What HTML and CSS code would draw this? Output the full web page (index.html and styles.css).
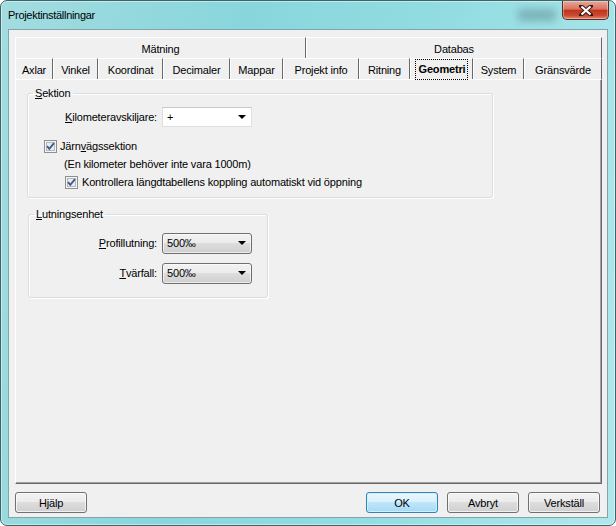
FILE: index.html
```html
<!DOCTYPE html>
<html lang="sv">
<head>
  <meta charset="UTF-8">
  <title>Projektinställningar</title>
  <link rel="stylesheet" href="styles.css">
</head>
<body>
  <div class="window">
    <div class="titlebar">
      <span class="title">Projektinställningar</span>
      <span class="ghost"></span>
      <span class="close">
        <svg width="14" height="11" viewBox="0 0 14 11">
          <path d="M2 1 L12 10 M12 1 L2 10" stroke="#3a1a14" stroke-width="4" stroke-linecap="square"/>
          <path d="M2.5 1.5 L11.5 9.5 M11.5 1.5 L2.5 9.5" stroke="#fff" stroke-width="2.2"/>
        </svg>
      </span>
    </div>

    <div class="client">
      <div class="tabs">
        <div class="tabrow back">
          <div class="tab">Mätning</div>
          <div class="tab">Databas</div>
        </div>
        <div class="tabrow front">
          <div class="tab">Axlar</div>
          <div class="tab">Vinkel</div>
          <div class="tab">Koordinat</div>
          <div class="tab">Decimaler</div>
          <div class="tab">Mappar</div>
          <div class="tab">Projekt info</div>
          <div class="tab">Ritning</div>
          <div class="tab active"><span class="focus">Geometri</span></div>
          <div class="tab">System</div>
          <div class="tab">Gränsvärde</div>
        </div>
      </div>

      <div class="panel">
        <fieldset class="group sektion">
          <legend><u>S</u>ektion</legend>
          <div class="field first">
            <label><u>K</u>ilometeravskiljare:</label>
            <div class="combo edit">+<i class="arrow"></i></div>
          </div>
          <div class="check main">
            <svg class="box" width="13" height="13" viewBox="0 0 13 13">
              <rect x="0.5" y="0.5" width="12" height="12" fill="#f4f4f4" stroke="#8e8f8f"/>
              <rect x="2.5" y="2.5" width="8" height="8" fill="#e9ebee" stroke="#b4b9be"/>
              <path d="M3 6.2 L5.3 8.8 L10 3.2" fill="none" stroke="#3d5a8c" stroke-width="1.8"/>
            </svg>
            <span>Järn<u>v</u>ägssektion</span>
          </div>
          <div class="note">(En kilometer behöver inte vara 1000m)</div>
          <div class="check sub">
            <svg class="box" width="13" height="13" viewBox="0 0 13 13">
              <rect x="0.5" y="0.5" width="12" height="12" fill="#f4f4f4" stroke="#8e8f8f"/>
              <rect x="2.5" y="2.5" width="8" height="8" fill="#e9ebee" stroke="#b4b9be"/>
              <path d="M3 6.2 L5.3 8.8 L10 3.2" fill="none" stroke="#3d5a8c" stroke-width="1.8"/>
            </svg>
            <span>Kontrollera längdtabellens koppling automatiskt vid öppning</span>
          </div>
        </fieldset>

        <fieldset class="group lutning">
          <legend><u>L</u>utningsenhet</legend>
          <div class="field first">
            <label><u>P</u>rofillutning:</label>
            <div class="combo list">500‰<i class="arrow"></i></div>
          </div>
          <div class="field">
            <label><u>T</u>värfall:</label>
            <div class="combo list">500‰<i class="arrow"></i></div>
          </div>
        </fieldset>
      </div>

      <div class="buttons">
        <button class="btn">Hjälp</button>
        <button class="btn default push">OK</button>
        <button class="btn">Avbryt</button>
        <button class="btn">Verkställ</button>
      </div>
    </div>
  </div>
</body>
</html>
```

FILE: styles.css
```css
*{ margin: 0; padding: 0; box-sizing: border-box; }
body{
  width: 616px;
  height: 526px;
  overflow: hidden;
  background: #fff;
  font-family: "Liberation Sans", Arial, sans-serif;
  font-size: 11px;
  letter-spacing: -0.17px;
  color: #000;
}
u{ text-decoration: underline; text-underline-offset: 1px; }

/* frame */
.window{
  width: 616px;
  height: 526px;
  border: 1px solid #3f6468;
  border-radius: 7px;
  background: linear-gradient(100deg, #a2dce0 0%, #88d6dc 35%, #93dde2 65%, #b0e8eb 100%);
  box-shadow: inset 0 0 0 1px rgba(255,255,255,.45);
}
.titlebar{
  height: 28px;
  display: flex;
  align-items: flex-start;
}
.title{
  padding: 7px 0 0 7px;
  line-height: 14px;
  letter-spacing: -0.3px;
}
.ghost{
  margin: 8px 6px 0 auto;
  width: 38px;
  height: 12px;
  background: #5e8c92;
  opacity: .55;
  filter: blur(4px);
}
.close{
  margin-right: 6px;
  width: 47px;
  height: 19px;
  border: 1px solid #5b2a22;
  border-top: 0;
  border-radius: 0 0 5px 5px;
  background: linear-gradient(#eaa79c 0%, #d9725f 45%, #c1341c 52%, #c94a31 80%, #e18a70 100%);
  box-shadow: inset 0 0 0 1px rgba(255,255,255,.35);
  display: flex;
  align-items: center;
  justify-content: center;
}

.client{
  margin: 0 7px;
  width: 600px;
  height: 489px;
  border: 1px solid #82a4a8;
  background: #f0f0f0;
  padding: 7px 7px 5px 6px;
}

/* tabs */
.tabs{ width: 587px; }
.tabrow{
  display: flex;
  height: 21px;
}
.tab{
  flex: 0 0 auto;
  text-align: center;
  line-height: 22px;
  border-top: 1px solid #fff;
  border-left: 1px solid #fff;
  border-right: 1px solid #696969;
  white-space: nowrap;
}
.back .tab:first-child{ flex-basis: 291px; }
.back .tab:last-child{ flex-basis: 296px; }
.front .tab:nth-child(1){ flex-basis: 38px; }
.front .tab:nth-child(2){ flex-basis: 45px; }
.front .tab:nth-child(3){ flex-basis: 65px; }
.front .tab:nth-child(4){ flex-basis: 67px; }
.front .tab:nth-child(5){ flex-basis: 53px; }
.front .tab:nth-child(6){ flex-basis: 76px; }
.front .tab:nth-child(7){ flex-basis: 51px; }
.front .tab:nth-child(8){ flex-basis: 63px; }
.front .tab:nth-child(9){ flex-basis: 51px; }
.front .tab:nth-child(10){ flex-basis: 78px; }
.tab.active{
  font-weight: bold;
  line-height: 17px;
  padding-top: 1px;
}
.focus{
  display: inline-block;
  outline: 1px dotted #000;
  padding: 1px 2px 1px 3px;
}

.panel{
  width: 587px;
  height: 405px;
  border-top: 1px solid #fff;
  border-left: 1px solid #fff;
  border-right: 1px solid #696969;
  border-bottom: 1px solid #696969;
  box-shadow: inset -1px -1px 0 #a0a0a0;
  padding: 7px 0 0 11px;
}

/* group boxes */
.group{
  border: 1px solid #d5dfe5;
  border-radius: 3px;
  box-shadow: inset 1px 1px 0 #fff, 1px 1px 0 #fff;
  min-width: 0;
}
.group legend{
  margin-left: 5px;
  padding: 0 2px;
  line-height: 13px;
}
.sektion{
  width: 466px;
  height: 111px;
}
.lutning{
  width: 240px;
  height: 90px;
  margin: 10px 0 0 1px;
}
.field{
  display: flex;
  align-items: center;
  height: 20px;
}
.field label{
  width: 129px;
  text-align: right;
  margin-right: 5px;
}
.sektion .field.first{ margin-top: 7px; }
.lutning .field.first{ margin-top: 12px; }
.lutning .field + .field{ margin-top: 10px; }
.lutning .field label{ width: 128px; }

.combo{
  position: relative;
  width: 90px;
  height: 20px;
  line-height: 18px;
  padding-left: 4px;
}
.combo.edit{
  background: #fff;
  border: 1px solid #dcdfe3;
  border-top-color: #c5c8cc;
}
.combo.list{
  height: 21px;
  line-height: 19px;
  border: 1px solid #707070;
  border-radius: 3px;
  background: linear-gradient(#f2f2f2 0%, #ebebeb 50%, #dddddd 50%, #cfcfcf 100%);
  box-shadow: inset 0 0 0 1px rgba(255,255,255,.6);
}
.arrow{
  position: absolute;
  right: 5px;
  top: 7px;
  width: 0;
  height: 0;
  border-left: 4px solid transparent;
  border-right: 4px solid transparent;
  border-top: 4px solid #000;
}

.check{
  display: flex;
  align-items: center;
  height: 14px;
}
.check .box{ flex: none; }
.check.main{
  margin: 12px 0 0 16px;
  gap: 3px;
}
.note{
  margin: 4px 0 0 36px;
  line-height: 14px;
}
.check.sub{
  margin: 4px 0 0 37px;
  gap: 4px;
}

/* bottom buttons */
.buttons{
  display: flex;
  gap: 9px;
  margin-top: 8px;
}
.btn{
  width: 72px;
  height: 21px;
  font-family: inherit;
  font-size: 11px;
  letter-spacing: inherit;
  color: #000;
  border: 1px solid #707070;
  border-radius: 3px;
  background: linear-gradient(#f2f2f2 0%, #ebebeb 50%, #dddddd 50%, #cfcfcf 100%);
  box-shadow: inset 0 0 0 1px rgba(255,255,255,.7);
}
.btn.push{ margin-left: auto; }
.btn.default{
  border-color: #3c7fb1;
  background: linear-gradient(#eaf6fd 0%, #d9f0fc 50%, #bee6fd 50%, #a7d9f5 100%);
  box-shadow: inset 0 0 0 1px #c7f2ff;
}
```
